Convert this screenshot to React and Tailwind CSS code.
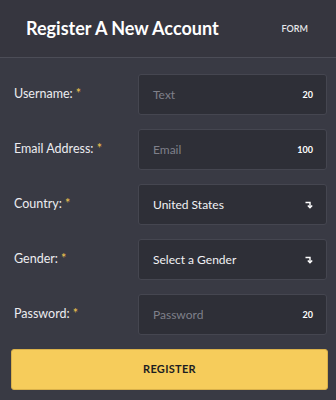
const fields = [
  { label: 'Username:', placeholder: 'Text', count: '20' },
  { label: 'Email Address:', placeholder: 'Email', count: '100' },
  { label: 'Country:', value: 'United States', select: true },
  { label: 'Gender:', value: 'Select a Gender', select: true },
  { label: 'Password:', placeholder: 'Password', count: '20' },
];

const TurnDown = () => (
  <svg width="8" height="8" viewBox="0 0 8 8" fill="none" stroke="white" strokeWidth="1.4">
    <path d="M0.5 1.5 H5 V6.5" />
    <path d="M2.8 4.6 L5 6.8 L7.2 4.6" />
  </svg>
);

const App = () => {
  return (
    <div className="w-[336px] h-[400px] bg-[#393a44] text-white" style={{ fontFamily: 'Lato, "Noto Sans", sans-serif' }}>
      <div className="h-[58px] flex items-center justify-between pl-[26px] pr-[28px] bg-[#36363f] border-b border-[#4c4d57]">
        <h1 className="text-[18px] font-bold">Register A New Account</h1>
        <span className="text-[9px] font-semibold text-[#e6e6ea]">FORM</span>
      </div>
      <div className="pt-[16px] px-[9px] flex flex-col gap-[14px]">
        {fields.map((f) => (
          <div key={f.label} className="flex items-center">
            <label className="w-[129px] pl-[5px] text-[12.5px] text-[#ececf0]">
              {f.label} <span className="text-[#f2c64f]">*</span>
            </label>
            <div className="flex-1 h-[41px] flex items-center justify-between pl-[14px] pr-[13px] bg-[#2e2f37] border border-[#454650] rounded-[3px]">
              {f.select ? (
                <span className="text-[12px] text-[#f2f2f5]">{f.value}</span>
              ) : (
                <span className="text-[12px] text-[#7f808a]">{f.placeholder}</span>
              )}
              {f.select ? (
                <TurnDown />
              ) : (
                <span className="text-[9px] font-bold text-white">{f.count}</span>
              )}
            </div>
          </div>
        ))}
      </div>
      <div className="pl-[11px] pr-[8px] pt-[14px]">
        <button className="w-full h-[41px] bg-[#f6cc5b] rounded-[3px] border border-[#d9b04a] text-[#1d1d22] text-[11px] font-bold tracking-[0.3px]">
          REGISTER
        </button>
      </div>
    </div>
  );
};

export default App;
